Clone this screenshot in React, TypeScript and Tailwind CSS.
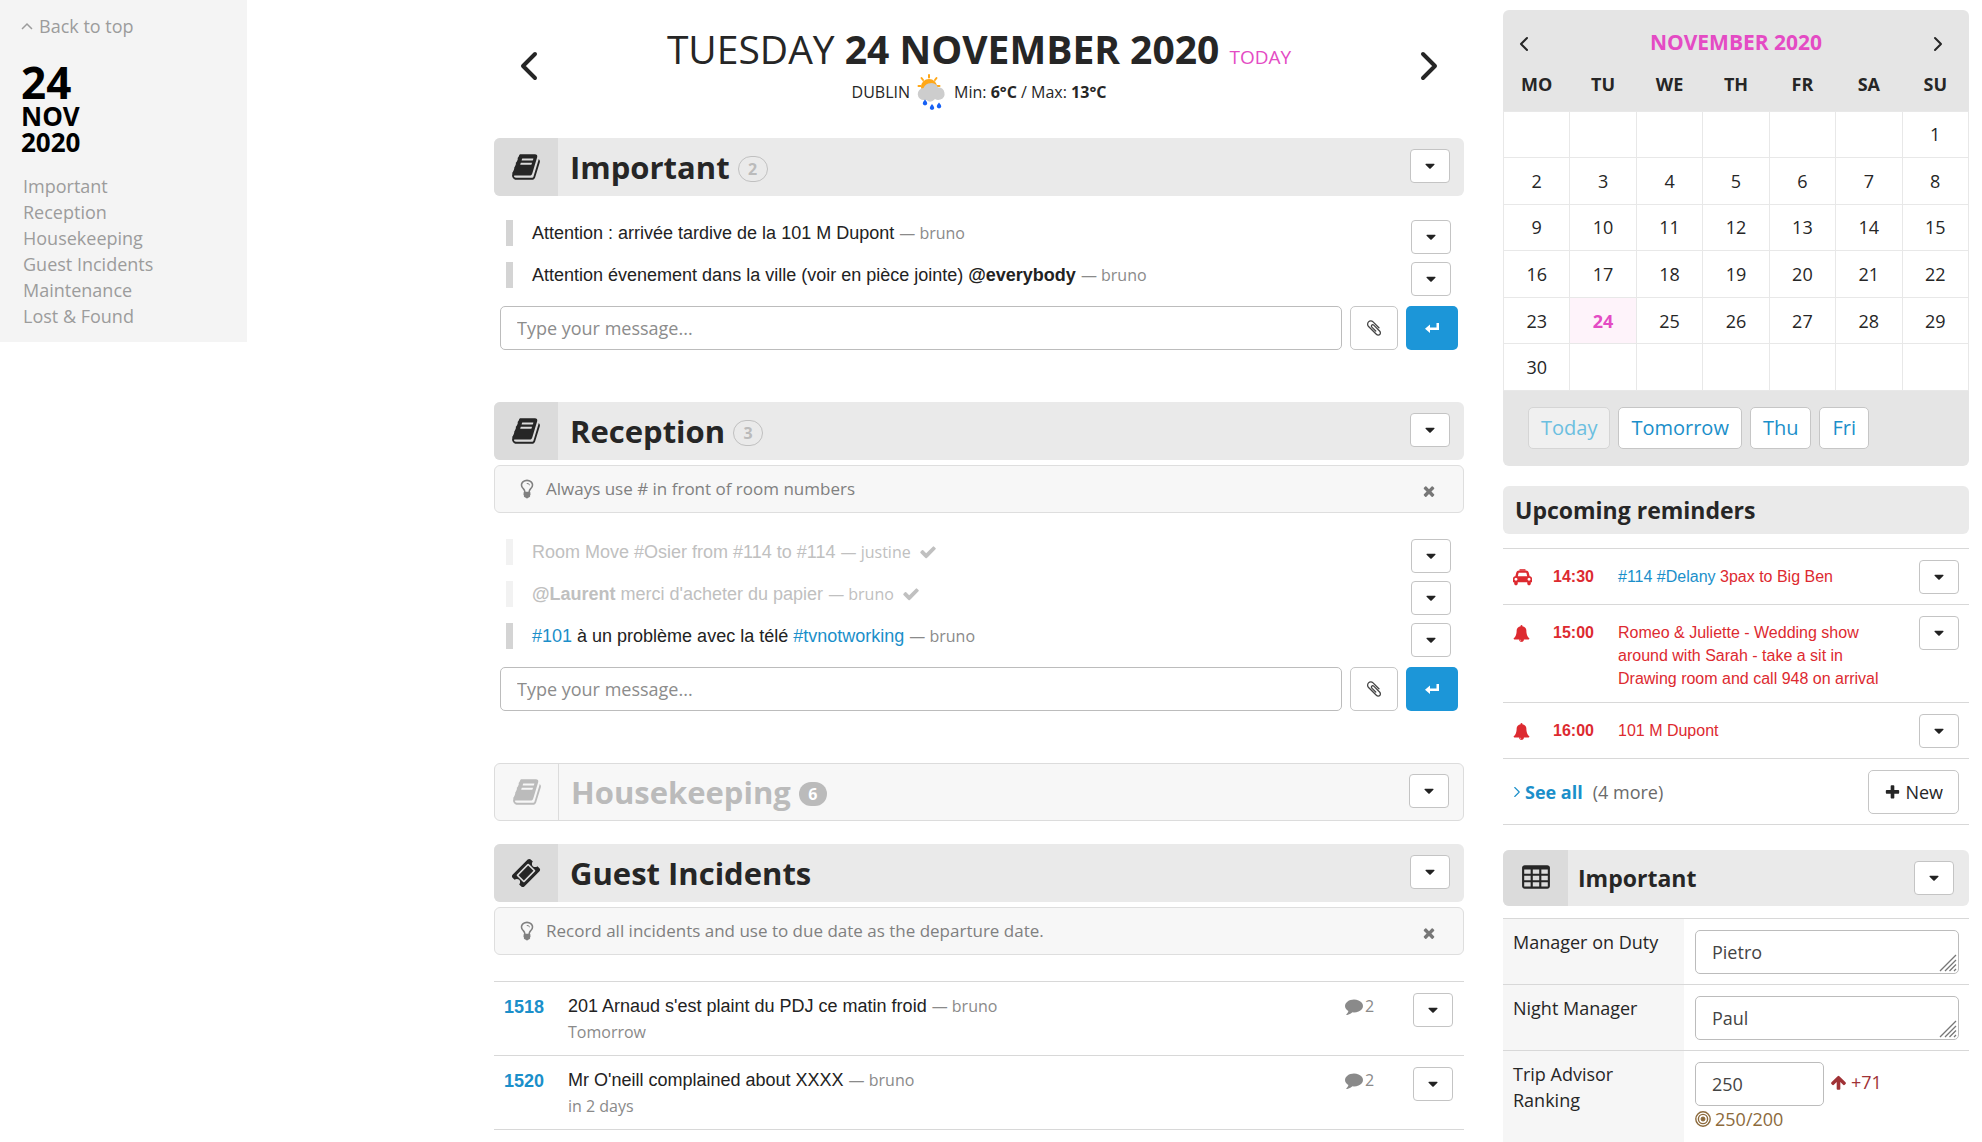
import { useState } from 'react';
import type { ReactNode } from 'react';

const ICONS = {
  book: 'M1703 478q40 57 18 129l-275 906q-19 64-76.5 107.5t-122.5 43.5h-923q-77 0-148.5-53.5t-99.5-131.5q-24-67-2-127 0-4 3-27t4-37q1-8-3-21.5t-3-19.5q2-11 8-21t16.5-23.5 16.5-23.5q23-38 45-91.5t30-91.5q3-10 .5-30t-.5-28q3-11 17-28t17-23q21-36 42-92t25-90q1-9-2.5-32t.5-28q4-13 22-30.5t22-22.5q19-26 42.5-84.5t27.5-96.5q1-8-3-25.5t-2-26.5q2-8 9-18t18-23 17-21q8-12 16.5-30.5t15-35 16-36 19.5-32 26.5-23.5 36-11.5 47.5 5.5l-1 3q38-9 51-9h761q74 0 114 56t18 130l-274 906q-36 119-71.5 153.5t-128.5 34.5h-869q-27 0-38 15-11 16-1 43 24 70 144 70h923q29 0 56-15.5t35-41.5l300-987q7-22 5-57 38 15 59 43zm-1064 2q-4 13 2 22.5t20 9.5h608q13 0 25.5-9.5t16.5-22.5l21-64q4-13-2-22.5t-20-9.5h-608q-13 0-25.5 9.5t-16.5 22.5zm-83 256q-4 13 2 22.5t20 9.5h608q13 0 25.5-9.5t16.5-22.5l21-64q4-13-2-22.5t-20-9.5h-608q-13 0-25.5 9.5t-16.5 22.5z',
  ticket:
    'M1024 452l316 316-572 572-316-316zm-211 979l618-618q19-19 19-45t-19-45l-362-362q-18-18-45-18t-45 18l-618 618q-19 19-19 45t19 45l362 362q18 18 45 18t45-18zm889-637l-907 908q-37 37-90.5 37t-90.5-37l-126-126q56-56 56-136t-56-136-136-56-136 56l-125-126q-37-37-37-90.5t37-90.5l907-906q37-37 90.5-37t90.5 37l125 125q-56 56-56 136t56 136 136 56 136-56l126 125q37 37 37 90.5t-37 90.5z',
  comment:
    'M1792 896q0 174-120 321.5t-326 233-450 85.5q-70 0-145-8-198 175-460 242-49 14-114 22-17 2-30.5-9t-17.5-29v-1q-3-4-.5-12t2-10 4.5-9.5l6-9 7-8.5 8-9q7-8 31-34.5t34.5-38 31-39.5 32.5-51 27-59 26-76q-157-89-247.5-220t-90.5-281q0-130 71-248.5t191-204.5 286-136.5 348-50.5q244 0 450 85.5t326 233 120 321.5z',
  check:
    'M1671 566q0 40-28 68l-724 724-136 136q-28 28-68 28t-68-28l-136-136-362-362q-28-28-28-68t28-68l136-136q28-28 68-28t68 28l294 295 656-657q28-28 68-28t68 28l136 136q28 28 28 68z',
  times:
    'M1490 1322q0 40-28 68l-136 136q-28 28-68 28t-68-28l-294-294-294 294q-28 28-68 28t-68-28l-136-136q-28-28-28-68t28-68l294-294-294-294q-28-28-28-68t28-68l136-136q28-28 68-28t68 28l294 294 294-294q28-28 68-28t68 28l136 136q28 28 28 68t-28 68l-294 294 294 294q28 28 28 68z',
  caret:
    'M1408 704q0 26-19 45l-448 448q-19 19-45 19t-45-19l-448-448q-19-19-19-45t19-45 45-19h896q26 0 45 19t19 45z',
  plus: 'M1600 736v192q0 40-28 68t-68 28h-416v416q0 40-28 68t-68 28h-192q-40 0-68-28t-28-68v-416h-416q-40 0-68-28t-28-68v-192q0-40 28-68t68-28h416v-416q0-40 28-68t68-28h192q40 0 68 28t28 68v416h416q40 0 68 28t28 68z',
  bell: 'M912 1696q0-16-16-16-59 0-101.5-42.5t-42.5-101.5q0-16-16-16t-16 16q0 73 51.5 124.5t124.5 51.5q16 0 16-16zm816-288q0 52-38 90t-90 38h-448q0 106-75 181t-181 75-181-75-75-181h-448q-52 0-90-38t-38-90q50-42 91-88t85-119.5 74.5-158.5 50-206 19.5-260q0-152 117-282.5t307-158.5q-8-19-8-39 0-40 28-68t68-28 68 28 28 68q0 20-8 39 190 28 307 158.5t117 282.5q0 139 19.5 260t50 206 74.5 158.5 85 119.5 91 88z',
  bulb: 'M1120 576q0 13-9.5 22.5t-22.5 9.5-22.5-9.5-9.5-22.5q0-46-54-71t-106-25q-13 0-22.5-9.5t-9.5-22.5 9.5-22.5 22.5-9.5q50 0 99.5 16t87 54 37.5 90zm160 0q0-72-34.5-134t-90-101.5-123-62-136.5-22.5-136.5 22.5-123 62-90 101.5-34.5 134q0 101 68 180 10 11 30.5 33t30.5 33q128 153 141 298h228q13-145 141-298 10-11 30.5-33t30.5-33q68-79 68-180zm128 0q0 155-103 268-45 49-74.5 87t-59.5 95.5-34 107.5q47 28 47 82 0 37-25 64 25 27 25 64 0 52-45 81 13 23 13 47 0 46-31.5 71t-77.5 25q-20 44-60 70t-87 26-87-26-60-70q-46 0-77.5-25t-31.5-71q0-24 13-47-45-29-45-81 0-37 25-64-25-27-25-64 0-54 47-82-4-50-34-107.5t-59.5-95.5-74.5-87q-103-113-103-268 0-99 44.5-184.5t117-142 164-89 186.5-32.5 186.5 32.5 164 89 117 142 44.5 184.5z',
  arrowUp:
    'M1675 971q0 51-37 90l-75 75q-38 38-91 38-54 0-90-38l-294-293v704q0 52-37.5 84.5t-90.5 32.5h-128q-53 0-90.5-32.5t-37.5-84.5v-704l-294 293q-36 38-90 38t-90-38l-75-75q-38-38-38-90 0-53 38-91l651-651q35-37 90-37 54 0 91 37l651 651q37 39 37 91z',
  clip: 'M1596 1385q0 117-79 196t-196 79q-135 0-235-100l-777-776q-113-115-113-271 0-159 110-270t269-111q158 0 273 113l605 606q10 10 10 22 0 16-30.5 46.5t-46.5 30.5q-13 0-23-10l-606-607q-79-77-181-77-106 0-179 75t-73 181q0 105 76 181l776 777q63 63 145 63 64 0 106-42t42-106q0-82-63-145l-581-581q-26-24-60-24-29 0-48 19t-19 48q0 32 25 59l410 410q10 10 10 22 0 16-31 47t-47 31q-12 0-22-10l-410-410q-63-61-63-149 0-82 57-139t139-57q88 0 149 63l581 581q100 98 100 235z',
  table:
    'M224 128h1344q66 0 113 47t47 113v1088q0 66-47 113t-113 47h-1344q-66 0-113-47t-47-113v-1088q0-66 47-113t113-47zM192 384v256h384v-256zM704 384v256h384v-256zM1216 384v256h384v-256zM192 768v256h384v-256zM704 768v256h384v-256zM1216 768v256h384v-256zM192 1152v256h384v-256zM704 1152v256h384v-256zM1216 1152v256h384v-256z',
};

type IconName = keyof typeof ICONS;

function Icon({ name, className }: { name: IconName; className: string }) {
  return (
    <svg viewBox="0 0 1792 1792" fill="currentColor" fillRule="evenodd" className={className} aria-hidden="true">
      <path d={ICONS[name]} />
    </svg>
  );
}

function TaxiIcon() {
  return (
    <svg viewBox="0 0 2048 1792" fill="currentColor" fillRule="evenodd" className="h-[17px] w-[19px]" aria-hidden="true">
      <path d="M704 0h640v160h-640z" />
      <path d="M480 1088q0-66-47-113t-113-47-113 47-47 113 47 113 113 47 113-47 47-113zm36-320h1016l-89-357q-2-8-14-17.5t-21-9.5h-768q-9 0-21 9.500t-14 17.500zm1372 320q0-66-47-113t-113-47-113 47-47 113 47 113 113 47 113-47 47-113zM2048 992v384q0 14-9 23t-23 9h-96v128q0 80-56 136t-136 56-136-56-56-136v-128H512v128q0 80-56 136t-136 56-136-56-56-136v-128H32q-14 0-23-9t-9-23V992q0-93 65.500-158.500T224 768h28l105-419q23-94 104-157.500T640 128h768q98 0 179 63.500T1691 349l105 419h28q93 0 158.500 65.500T2048 992z" />
    </svg>
  );
}

function Chevron({ points, className, width = 3 }: { points: string; className: string; width?: number }) {
  return (
    <svg viewBox="0 0 20 32" fill="none" stroke="currentColor" strokeWidth={width} className={className} aria-hidden="true">
      <polyline points={points} strokeLinejoin="round" strokeLinecap="round" />
    </svg>
  );
}

const LEFT = '16,4 4,16 16,28';
const RIGHT = '4,4 16,16 4,28';

function WeatherIcon() {
  return (
    <svg viewBox="0 0 30 36" className="h-9 w-[30px] shrink-0" aria-hidden="true">
      <g stroke="#ffa717" strokeWidth="2" strokeLinecap="round">
        <path d="M12 1v2.500M4.500 4l1.500 2M19.500 4l-1.500 2M1.500 12h2M20.500 12h2" />
      </g>
      <circle cx="12" cy="13" r="8" fill="#ffa717" />
      <path
        d="M7 26a6 6 0 0 1-.5-12 8 8 0 0 1 14.500-.5 6.200 6.200 0 0 1 2.500 12q-3 1-5.500-.5-4.500 5-8.500 1-1 .3-2.500 0z"
        fill="#cdcdcd"
      />
      <g fill="#1660f5">
        <path d="M8 25.500q4.500 5 0 6-4.500-1 0-6z" />
        <path d="M15 30q4.500 5 0 6-4.500-1 0-6z" />
        <path d="M22 28.500q4.500 5 0 6-4.500-1 0-6z" />
      </g>
    </svg>
  );
}

function MenuButton({ label }: { label: string }) {
  return (
    <button
      type="button"
      aria-label={label}
      className="flex h-[34px] w-10 shrink-0 items-center justify-center rounded border border-[#c4c4c4] bg-white text-[#222]"
    >
      <Icon name="caret" className="h-4 w-4" />
    </button>
  );
}

type HeaderProps = { icon: IconName; title: string; count?: number; muted?: boolean };

function SectionHeader({ icon, title, count, muted }: HeaderProps) {
  return (
    <header
      className={`flex h-[58px] items-center overflow-hidden rounded-md pr-3.5 ${
        muted ? 'border border-[#dcdcdc] bg-[#f7f7f7] text-[#bbb]' : 'bg-[#eaeaea] text-[#262626]'
      }`}
    >
      <span
        className={`flex w-16 items-center justify-center self-stretch ${
          muted ? 'border-r border-[#dcdcdc]' : 'bg-[#dbdbdb]'
        }`}
      >
        <Icon name={icon} className="h-[30px] w-[30px]" />
      </span>
      <h2 className="ml-3 text-[31px] leading-10 font-bold">{title}</h2>
      {count !== undefined && (
        <span
          className={`mt-1 ml-2 flex items-center justify-center rounded-full text-base font-bold ${
            muted ? 'h-6 w-7 bg-[#bbb] text-white' : 'h-[26px] w-[30px] border border-[#c0c0c0] text-[#bbb]'
          }`}
        >
          {count}
        </span>
      )}
      <span className="mb-0.5 ml-auto">
        <MenuButton label={`${title} options`} />
      </span>
    </header>
  );
}

function Tip({ children }: { children: ReactNode }) {
  return (
    <div className="mt-[5px] flex h-12 items-center rounded-md border border-[#dedede] bg-[#f7f7f7] pr-[26px] pl-[21px] text-[17px] text-[#808080]">
      <Icon name="bulb" className="h-[22px] w-[22px]" />
      <p className="ml-2 font-medium">{children}</p>
      <button type="button" aria-label="Dismiss tip" className="mt-1 ml-auto text-[#777]">
        <Icon name="times" className="h-4 w-4" />
      </button>
    </div>
  );
}

type Message = { id: number; body: ReactNode; author: string; done?: boolean };

function Author({ name }: { name: string }) {
  return <span className="font-['Open_Sans',sans-serif] text-base text-[#8a8a8a]">— {name}</span>;
}

function MessageList({ messages }: { messages: Message[] }) {
  return (
    <ul className="flex flex-col gap-2 pr-[13px] pl-3">
      {messages.map((message) => (
        <li key={message.id} className="flex h-[34px] items-start justify-between">
          <div
            className={`flex h-[26px] items-center border-l-[7px] pl-[19px] ${
              message.done ? 'border-[#f2f2f2] text-[#c0c0c0] [&_span]:text-[#c0c0c0]' : 'border-[#d4d4d4] text-[#222]'
            }`}
          >
            <p className="font-['Liberation_Sans',sans-serif] text-lg leading-[26px]">
              {message.body} <Author name={message.author} />
            </p>
            {message.done && <Icon name="check" className="ml-2 h-[18px] w-[18px]" />}
          </div>
          <MenuButton label="Message options" />
        </li>
      ))}
    </ul>
  );
}

function Composer({ section }: { section: string }) {
  const [value, setValue] = useState('');

  return (
    <form className="mt-2.5 flex gap-2 px-1.5" onSubmit={(event) => event.preventDefault()}>
      <input
        type="text"
        aria-label={`Message for ${section}`}
        placeholder="Type your message..."
        value={value}
        onChange={(event) => setValue(event.target.value)}
        className="h-11 min-w-0 flex-1 rounded-[5px] border border-[#bcbcbc] bg-white px-4 text-lg text-[#333] placeholder:text-[#8c8c8c]"
      />
      <button
        type="button"
        aria-label="Attach file"
        className="flex w-12 items-center justify-center rounded-[5px] border border-[#c6c6c6] bg-white text-[#444]"
      >
        <Icon name="clip" className="h-[18px] w-[18px]" />
      </button>
      <button
        type="submit"
        aria-label="Send"
        className="flex w-[52px] items-center justify-center rounded-[5px] bg-[#1c96d8] text-white"
      >
        <svg viewBox="0 0 16 12" className="h-3 w-4" fill="currentColor" aria-hidden="true">
          <path d="M12.500 1H15v7H6v3L1 6.800 6 2.600v3h6.500z" />
        </svg>
      </button>
    </form>
  );
}

const IMPORTANT: Message[] = [
  { id: 1, body: 'Attention : arrivée tardive de la 101 M Dupont', author: 'bruno' },
  {
    id: 2,
    body: (
      <>
        Attention évenement dans la ville (voir en pièce jointe) <b>@everybody</b>
      </>
    ),
    author: 'bruno',
  },
];

const RECEPTION: Message[] = [
  { id: 1, body: 'Room Move #Osier from #114 to #114', author: 'justine', done: true },
  {
    id: 2,
    body: (
      <>
        <b>@Laurent</b> merci d'acheter du papier
      </>
    ),
    author: 'bruno',
    done: true,
  },
  {
    id: 3,
    body: (
      <>
        <a href="#101" className="text-[#1b8fca]">#101</a> à un problème avec la télé{' '}
        <a href="#tvnotworking" className="text-[#1b8fca]">#tvnotworking</a>
      </>
    ),
    author: 'bruno',
  },
];

const INCIDENTS = [
  { id: 1518, title: "201 Arnaud s'est plaint du PDJ ce matin froid", due: 'Tomorrow' },
  { id: 1520, title: "Mr O'neill complained about XXXX", due: 'in 2 days' },
];

function Incidents() {
  return (
    <table className="mt-[26px] w-full border-b border-[#d8d8d8]">
      <tbody>
        {INCIDENTS.map((incident) => (
          <tr key={incident.id} className="h-[74px] border-t border-[#d8d8d8] align-top">
            <td className="w-[74px] pt-3 pl-2.5 text-lg leading-6">
              <a href={`#${incident.id}`} className="font-['Liberation_Sans',sans-serif] font-bold text-[#1b8fca]">
                {incident.id}
              </a>
            </td>
            <td className="pt-3">
              <p className="font-['Liberation_Sans',sans-serif] text-lg leading-6 text-[#222]">
                {incident.title} <Author name="bruno" />
              </p>
              <p className="mt-0.5 text-base leading-6 text-[#8a8a8a]">{incident.due}</p>
            </td>
            <td className="w-[68px] pt-3">
              <span className="flex items-center gap-0.5 text-base leading-6 text-[#8a8a8a]">
                <Icon name="comment" className="h-[18px] w-[18px]" />2
              </span>
            </td>
            <td className="w-[51px] pt-[11px]">
              <MenuButton label="Incident options" />
            </td>
          </tr>
        ))}
      </tbody>
    </table>
  );
}

const WEEKS = [
  [0, 0, 0, 0, 0, 0, 1],
  [2, 3, 4, 5, 6, 7, 8],
  [9, 10, 11, 12, 13, 14, 15],
  [16, 17, 18, 19, 20, 21, 22],
  [23, 24, 25, 26, 27, 28, 29],
  [30, 0, 0, 0, 0, 0, 0],
];

function Calendar() {
  return (
    <section className="rounded-md bg-[#e5e5e5]">
      <div className="flex h-[50px] items-start justify-between px-4 pt-4">
        <button type="button" aria-label="Previous month" className="w-5 pt-2.5">
          <Chevron points={LEFT} width={4} className="h-4 w-2.5" />
        </button>
        <h2 className="text-[21px] leading-8 font-bold text-[#e44bc4]">NOVEMBER 2020</h2>
        <button type="button" aria-label="Next month" className="w-5 pt-2.5">
          <Chevron points={RIGHT} width={4} className="h-4 w-2.5" />
        </button>
      </div>
      <table className="h-[331px] w-full table-fixed border-collapse text-center text-lg">
        <thead>
          <tr className="h-[51px]">
            {['MO', 'TU', 'WE', 'TH', 'FR', 'SA', 'SU'].map((day) => (
              <th key={day} className="pb-0.5 font-bold">
                {day}
              </th>
            ))}
          </tr>
        </thead>
        <tbody className="bg-white">
          {WEEKS.map((week, row) => (
            <tr key={row}>
              {week.map((day, column) => (
                <td
                  key={column}
                  className={`border border-[#e8e8e8] ${day === 24 ? 'bg-[#fef3fa] font-bold text-[#e44bc4]' : ''}`}
                >
                  {day || ''}
                </td>
              ))}
            </tr>
          ))}
        </tbody>
      </table>
      <div className="flex gap-2 px-[25px] pt-4 pb-[17px] text-xl text-[#1b8fca]">
        {['Today', 'Tomorrow', 'Thu', 'Fri'].map((label) => (
          <button
            key={label}
            type="button"
            disabled={label === 'Today'}
            className="h-[42px] rounded-[5px] border border-[#c6c6c6] bg-white px-3 font-medium disabled:border-[#d5d5d5] disabled:bg-[#f0f0f0] disabled:text-[#6bbfe0]"
          >
            {label}
          </button>
        ))}
      </div>
    </section>
  );
}

const REMINDERS: { time: string; icon: ReactNode; body: ReactNode }[] = [
  {
    time: '14:30',
    icon: <TaxiIcon />,
    body: (
      <>
        <a href="#delany" className="text-[#1b8fca]">#114 #Delany</a> 3pax to Big Ben
      </>
    ),
  },
  {
    time: '15:00',
    icon: <Icon name="bell" className="h-[17px] w-[17px]" />,
    body: 'Romeo & Juliette - Wedding show around with Sarah - take a sit in Drawing room and call 948 on arrival',
  },
  { time: '16:00', icon: <Icon name="bell" className="h-[17px] w-[17px]" />, body: '101 M Dupont' },
];

function Reminders() {
  return (
    <section className="mt-5">
      <h2 className="rounded-md bg-[#eaeaea] px-3 py-1.5 text-[23px] leading-9 font-bold">Upcoming reminders</h2>
      <ul className="mt-3.5 font-['Liberation_Sans',sans-serif] text-base text-[#dd2a30]">
        {REMINDERS.map((reminder) => (
          <li key={reminder.time} className="flex items-start border-t border-[#d8d8d8] px-2.5 pt-[11px] pb-2.5">
            <span className="flex h-[34px] w-10 items-center">{reminder.icon}</span>
            <b className="w-[65px] leading-[34px]">{reminder.time}</b>
            <p className="flex-1 pt-[5px] pr-6 pb-0.5 leading-[23px]">{reminder.body}</p>
            <MenuButton label="Reminder options" />
          </li>
        ))}
      </ul>
      <div className="flex items-center justify-between border-y border-[#d8d8d8] px-2.5 pt-[11px] pb-2.5 text-lg">
        <p className="flex items-center">
          <Chevron points={RIGHT} className="mr-1 h-3 w-2 text-[#1b8fca]" />
          <a href="#reminders" className="font-bold text-[#1b8fca]">See all</a>
          <span className="ml-2.5 text-[#6a6a6a]">(4 more)</span>
        </p>
        <button type="button" className="flex h-11 items-center gap-1 rounded-[5px] border border-[#c6c6c6] bg-white px-[15px]">
          <Icon name="plus" className="h-[17px] w-[17px]" />
          New
        </button>
      </div>
    </section>
  );
}

function ManagerRow({ id, label, value }: { id: string; label: string; value: string }) {
  return (
    <tr className="border-t border-[#d8d8d8] align-top">
      <th scope="row" className="bg-[#f6f6f6] px-2.5 pt-2.5 text-left font-normal">
        <label htmlFor={id}>{label}</label>
      </th>
      <td className="pt-[11px] pr-2.5 pb-2.5 pl-[11px]">
        <div className="relative">
          <textarea
            id={id}
            defaultValue={value}
            rows={1}
            className="block h-11 w-full resize-none overflow-hidden rounded-[5px] border border-[#bcbcbc] bg-white px-4 py-2 text-[#444]"
          />
          <svg viewBox="0 0 18 18" stroke="#777" className="absolute right-0.5 bottom-0.5 h-[18px] w-[18px]" aria-hidden="true">
            <path d="M1 17L17 1M6 17L17 6M10.500 17L17 10.500M15 17l2-2" strokeWidth="1.300" />
          </svg>
        </div>
      </td>
    </tr>
  );
}

function KeyFigures() {
  return (
    <section className="mt-[25px]">
      <header className="flex h-14 items-center overflow-hidden rounded-md bg-[#eaeaea] pr-[15px]">
        <span className="flex w-[65px] items-center justify-center self-stretch bg-[#dbdbdb]">
          <Icon name="table" className="h-[30px] w-[30px]" />
        </span>
        <h2 className="ml-2.5 flex-1 text-[23px] font-bold">Important</h2>
        <MenuButton label="Important options" />
      </header>
      <table className="mt-3 w-full table-fixed text-lg leading-[26px]">
        <colgroup>
          <col className="w-[181px]" />
          <col />
        </colgroup>
        <tbody>
          <ManagerRow id="duty" label="Manager on Duty" value="Pietro" />
          <ManagerRow id="night" label="Night Manager" value="Paul" />
          <tr className="border-t border-[#d8d8d8] align-top">
            <th scope="row" className="bg-[#f6f6f6] px-2.5 pt-2.5 text-left font-normal">
              <label htmlFor="ranking">Trip Advisor Ranking</label>
            </th>
            <td className="pt-[11px] pr-2.5 pb-2.5 pl-[11px]">
              <div className="flex items-center gap-1.5 text-[#a03236]">
                <input
                  id="ranking"
                  type="text"
                  defaultValue="250"
                  className="h-11 w-[129px] rounded-[5px] border border-[#bcbcbc] bg-white px-4 text-[#444]"
                />
                <span className="flex items-center gap-1 pb-1">
                  <Icon name="arrowUp" className="h-[17px] w-[17px]" />
                  +71
                </span>
              </div>
              <p className="flex items-center gap-1 font-medium text-[#8c6a3c]">
                <svg viewBox="0 0 16 16" fill="none" stroke="currentColor" className="h-4 w-4" aria-hidden="true">
                  <circle cx="8" cy="8" r="7.200" strokeWidth="1.400" />
                  <circle cx="8" cy="8" r="4.600" strokeWidth="1.400" />
                  <circle cx="8" cy="8" r="2" fill="currentColor" />
                </svg>
                250/200
              </p>
            </td>
          </tr>
        </tbody>
      </table>
    </section>
  );
}

const SECTIONS = ['Important', 'Reception', 'Housekeeping', 'Guest Incidents', 'Maintenance', 'Lost & Found'];

export default function App() {
  return (
    <div className="flex h-screen items-start overflow-hidden bg-white font-['Open_Sans',sans-serif] text-[#262626]">
      <nav className="w-[247px] shrink-0 bg-[#f4f4f4] px-[21px] pt-[13px] pb-[13px] text-lg leading-[26px] text-[#9c9c9c]">
        <a href="#top" className="flex items-center gap-1.5">
          <svg viewBox="0 0 12 8" fill="none" stroke="currentColor" strokeWidth="1.500" className="h-2 w-3" aria-hidden="true">
            <path d="M1 7l5-5 5 5" />
          </svg>
          Back to top
        </a>
        <p className="mt-[22px] text-[26px] font-bold text-black">
          <span className="block text-[44px] leading-[42px]">24</span>
          NOV
          <br />
          2020
        </p>
        <ul className="mt-[18px] pl-0.5">
          {SECTIONS.map((section) => (
            <li key={section}>
              <a href={`#${section}`}>{section}</a>
            </li>
          ))}
        </ul>
      </nav>

      <main className="mr-[39px] ml-[247px] min-w-0 flex-1">
        <div className="flex h-[138px] items-start justify-between px-[25px]">
          <button type="button" aria-label="Previous day" className="pt-[50px]">
            <Chevron points={LEFT} width={4} className="h-8 w-5" />
          </button>
          <div className="pt-6 text-center">
            <h1 className="text-[39px] leading-[50px]">
              TUESDAY <b>24 NOVEMBER 2020</b> <span className="text-[19px] leading-none text-[#e44bc4]">TODAY</span>
            </h1>
            <p className="flex items-center justify-center gap-[7px] text-base">
              DUBLIN <WeatherIcon />
              <span>
                Min: <b>6°C</b> / Max: <b>13°C</b>
              </span>
            </p>
          </div>
          <button type="button" aria-label="Next day" className="pt-[50px]">
            <Chevron points={RIGHT} width={4} className="h-8 w-5" />
          </button>
        </div>

        <section>
          <SectionHeader icon="book" title="Important" count={2} />
          <div className="mt-6">
            <MessageList messages={IMPORTANT} />
            <Composer section="Important" />
          </div>
        </section>

        <section className="mt-[52px]">
          <SectionHeader icon="book" title="Reception" count={3} />
          <Tip>Always use # in front of room numbers</Tip>
          <div className="mt-[26px]">
            <MessageList messages={RECEPTION} />
            <Composer section="Reception" />
          </div>
        </section>

        <section className="mt-[52px]">
          <SectionHeader icon="book" title="Housekeeping" count={6} muted />
        </section>

        <section className="mt-[23px]">
          <SectionHeader icon="ticket" title="Guest Incidents" />
          <Tip>Record all incidents and use to due date as the departure date.</Tip>
          <Incidents />
        </section>
      </main>

      <aside className="mr-[13px] w-[466px] shrink-0 pt-2.5">
        <Calendar />
        <Reminders />
        <KeyFigures />
      </aside>
    </div>
  );
}
